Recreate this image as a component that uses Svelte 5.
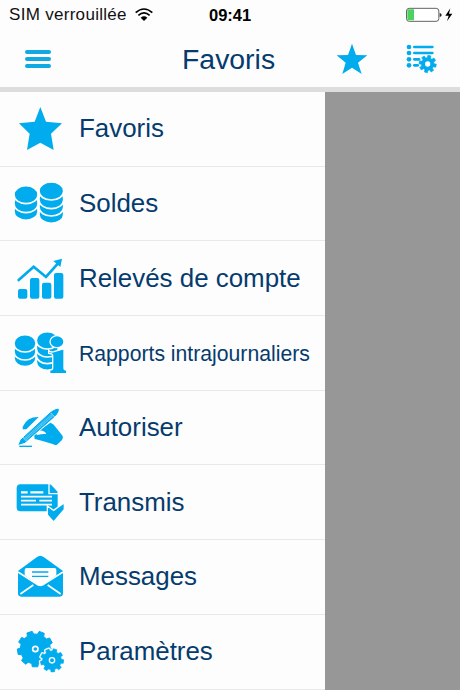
<script>
    const items = [
        { icon: "star", text: "Favoris", shift: 0 },
        { icon: "coins", text: "Soldes", shift: 1 },
        { icon: "chart", text: "Relevés de compte", shift: 2 },
        { icon: "info", text: "Rapports intrajournaliers", shift: 3, small: true },
        { icon: "pen", text: "Autoriser", shift: 4 },
        { icon: "sent", text: "Transmis", shift: 4 },
        { icon: "mail", text: "Messages", shift: 5 },
        { icon: "gears", text: "Paramètres", shift: 0 }
    ];

    // closed outline of a cog wheel
    function gear(cx, cy, outer, inner, teeth, turn = 0) {
        const step = (Math.PI * 2) / teeth;
        const points = [];
        for (let i = 0; i < teeth; i++) {
            const a = i * step + turn;
            for (const [r, d] of [[inner, -0.32], [outer, -0.22], [outer, 0.22], [inner, 0.32]]) {
                points.push((cx + r * Math.cos(a + d * step)).toFixed(1) + " " + (cy + r * Math.sin(a + d * step)).toFixed(1));
            }
        }
        return "M" + points.join("L") + "Z";
    }
</script>

{#snippet stack(x, y, rx, ry, gap, layers)}
    {#each Array(layers) as _, i}
        {@const n = layers - 1 - i}
        <path d="M{x - rx} {y + n * gap}a{rx} {ry} 0 0 1 {rx * 2} 0v{n ? 6 : 2}a{rx} {ry} 0 0 1 {-rx * 2} 0z" stroke="#fff" stroke-width="5" />
    {/each}
{/snippet}

<div class="screen">
    <div class="status">
        <div class="side">
            <span>SIM verrouillée</span>
            <svg viewBox="0 0 54 40" width="18" height="13.3">
                <path d="M2 14Q27-8 52 14M10 22Q27 7 44 22" fill="none" stroke="#000" stroke-width="5" />
                <path d="M17 29Q27 20 37 29L27 39z" />
            </svg>
        </div>
        <span class="time">09:41</span>
        <div class="side right">
            <svg viewBox="0 0 144 48" width="48" height="16">
                <rect x="4.5" y="4" width="97" height="39" rx="8" fill="#fff" stroke="#444" stroke-width="2.5" />
                <path d="M9 7h18v33H9q-2 0-2-3V10q0-3 2-3z" fill="#4cd35f" />
                <path d="M104 18q6 1 6 6t-6 6z" fill="#222" />
                <path d="M136 4L121 26h10l-5 17 16-23h-10z" />
            </svg>
        </div>
    </div>

    <header>
        <button class="burger" aria-label="Menu"><i></i><i></i><i></i></button>
        <h1>Favoris</h1>
        <svg viewBox="0 0 96 96" width="32" height="32">
            <path d="M48 2L60 36 94 37 66 59 77 93 48 74 19 93 29 59 2 37 36 36z" />
        </svg>
        <svg class="options" viewBox="0 0 93 90" width="31" height="30">
            {#each [9, 27, 46, 64] as y, i}
                <circle cx="9" cy={y} r="7" />
                <path d="M25 {y}h{i < 2 ? 54 : i == 2 ? 14 : 10}" stroke="#00abee" stroke-width="8" stroke-linecap="round" />
            {/each}
            <path d={gear(65, 60, 26, 19, 8, 0.2)} stroke="#00abee" stroke-width="2" stroke-linejoin="round" />
            <circle cx="65" cy="60" r="8" fill="#fff" />
        </svg>
    </header>

    <main>
        <nav>
            {#each items as item}
                <a href="#{item.icon}" class:small={item.small}>
                    <svg viewBox="0 0 210 225" width="70" height="75">
                        <g transform="translate(0 {item.shift})">
                            {#if item.icon == "star"}
                                <path d="M121 48L138 92 186 97 153 128 161 177 121 155 81 177 89 128 57 97 104 92z" />
                            {:else if item.icon == "coins"}
                                {@render stack(78, 84, 36, 26, 23, 3)}
                                {@render stack(154, 73, 37, 26, 22, 4)}
                            {:else if item.icon == "chart"}
                                <path d="M56 115L101 75 138 106 174 65" fill="none" stroke="#00abee" stroke-width="8" stroke-linecap="round" />
                                <path d="M186 51L181 76 160 58z" />
                                <rect x="54" y="142" width="28" height="29" rx="6" />
                                <rect x="90" y="109" width="28" height="62" rx="6" />
                                <rect x="126" y="123" width="28" height="48" rx="6" />
                                <rect x="162" y="94" width="28" height="77" rx="6" />
                            {:else if item.icon == "info"}
                                {@render stack(75, 81, 33, 25, 20, 3)}
                                {@render stack(142, 72, 33, 25, 20, 4)}
                                <g stroke="#fff" stroke-width="4">
                                    <path d="M146 103Q151 110 162 107L192 98V157Q192 162 200 162V173H149V162Q158 162 158 157V118Q158 113 146 112z" />
                                    <ellipse cx="171" cy="77" rx="21" ry="18" />
                                </g>
                            {:else if item.icon == "pen"}
                                <path d="M116 77Q82 76 69 105Q65 116 74 114L79 114z" />
                                <path d="M102 129L151 94Q161 97 166 106L188 134Q190 140 186 146L171 160Q165 162 158 158L130 150Q116 146 104 143z" />
                                <path d="M103 125Q113 116 127 118Q137 120 139 128Q124 127 113 131z" fill="#fff" />
                                <path d="M53 163L60 145 151 61Q168 49 177 51Q182 60 165 77L75 156z" stroke="#fff" stroke-width="3" />
                                <path d="M77 142L156 72" stroke="#fff" stroke-width="11" stroke-dasharray="2 2" opacity=".5" />
                                <path d="M68 137L79 149M151 64L164 77" stroke="#fff" stroke-width="2" />
                                <path d="M58 165H96" stroke="#00abee" stroke-width="4" />
                            {:else if item.icon == "sent"}
                                <path d="M61 54H149L173 79V124Q173 135 162 135H61Q50 135 50 123V66Q50 54 61 54z" />
                                <path d="M147 50V82H176" fill="none" stroke="#fff" stroke-width="4" />
                                <path d="M151 53L174 78H151z" />
                                <path d="M63 78H83M91 78H130" stroke="#fff" stroke-width="7" />
                                <path d="M63 91H156M63 103H108M118 103H156M63 115H156" stroke="#fff" stroke-width="5" />
                                <path d="M142 119L161 132 193 109V129L161 167 142 146z" stroke="#fff" stroke-width="4" />
                            {:else if item.icon == "mail"}
                                <path d="M54 91L110 50Q121 41 132 50L189 91V158Q189 168 179 168H64Q54 168 54 158z" />
                                <path d="M74 104V88Q74 82 80 82H163Q169 82 169 88V104L132 130Q121 137 111 130z" fill="#fff" />
                                <path d="M54 94L108 129Q121 139 134 129L189 94" fill="none" stroke="#fff" stroke-width="5" />
                                <path d="M61 160L100 133M182 160L143 133" stroke="#fff" stroke-width="5" />
                                <path d="M96 94H145M96 107H145" stroke="#00abee" stroke-width="4" />
                            {:else}
                                <path d={gear(106, 105, 54, 45, 9, -0.506)} stroke="#00abee" stroke-width="3" stroke-linejoin="round" />
                                <circle cx="106" cy="105" r="8" fill="#00abee" stroke="#fff" stroke-width="5" />
                                <path d={gear(156, 139, 35, 28, 9, 0.1)} stroke="#fff" stroke-width="10" stroke-linejoin="round" />
                                <path d={gear(156, 139, 35, 28, 9, 0.1)} stroke="#00abee" stroke-width="2" stroke-linejoin="round" />
                                <circle cx="156" cy="139" r="8" fill="#00abee" stroke="#fff" stroke-width="4" />
                            {/if}
                        </g>
                    </svg>
                    <span>{item.text}</span>
                </a>
            {/each}
        </nav>
        <div class="shade"></div>
    </main>
</div>

<style>
    :global(body) {
        background: #fff;
        overflow: hidden;
    }
    .screen {
        font-family: "Liberation Sans", Arial, sans-serif;
        width: 460px;
        height: 690px;
        display: flex;
        flex-direction: column;
        overflow: hidden;
        background: #fdfdfd;
        color: #063b6d;
    }
    svg {
        fill: #00abee;
        flex: none;
    }
    .status {
        display: flex;
        height: 30px;
        align-items: center;
        padding: 0 7px 0 9px;
        color: #111;
        font-size: 17px;
        white-space: nowrap;
        box-sizing: border-box;
    }
    .status svg {
        fill: #000;
    }
    .side {
        width: 200px;
        display: flex;
        align-items: center;
        gap: 8px;
        letter-spacing: 0.3px;
    }
    .side.right {
        flex: 1;
        justify-content: flex-end;
    }
    .time {
        width: 42px;
        font-weight: bold;
        font-size: 16.5px;
        color: #000;
    }
    header {
        height: 57px;
        display: flex;
        align-items: center;
        border-bottom: 5px solid #ddd;
    }
    .burger {
        width: 26px;
        margin: 0 0 0 25px;
        padding: 0;
        border: none;
        background: none;
        display: flex;
        flex-direction: column;
        gap: 3px;
    }
    .burger i {
        width: 26px;
        height: 4px;
        border-radius: 2px;
        background: #10a9e2;
    }
    h1 {
        font-size: 28.4px;
        font-weight: normal;
        margin: 2px 0 0 129px;
        padding-left: 2px;
        width: 154px;
    }
    .options {
        margin-left: 38px;
    }
    main {
        flex: 1;
        display: flex;
    }
    nav {
        width: 325px;
        background: #fdfdfd;
    }
    nav a {
        height: 74.7px;
        box-sizing: border-box;
        border-bottom: 1px solid #e9e9e9;
        display: flex;
        align-items: center;
        gap: 9px;
        color: inherit;
        text-decoration: none;
        font-size: 25.9px;
        white-space: nowrap;
    }
    nav a.small {
        font-size: 21.2px;
    }
    .small span {
        padding-top: 3px;
    }
    .shade {
        flex: 1;
        background: #979797;
    }
</style>
